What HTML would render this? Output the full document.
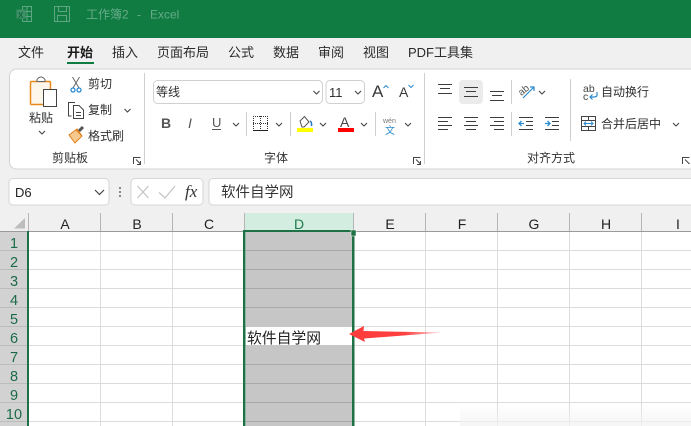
<!DOCTYPE html>
<html lang="zh-CN"><head><meta charset="utf-8"><title>Excel</title>
<style>
html,body{margin:0;padding:0;width:691px;height:426px;overflow:hidden;background:#fff}
svg{display:block;position:absolute;left:0;top:0}
text{font-family:"Liberation Sans","Noto Sans CJK SC",sans-serif;fill:#303030;font-size:12px}
.tab{font-size:13px;fill:#2b2b2b}
.hd{font-size:14px;fill:#222;text-anchor:middle}
.rn{font-size:14.500px;fill:#1c6a48;text-anchor:middle}
.lb{font-size:12px;fill:#333}
.ln{stroke:#444;stroke-width:1;fill:none}
.ch{stroke:#444;stroke-width:1.1;fill:none}
.sep{stroke:#cfcfcf;stroke-width:1}
.grid{stroke:#dcdcdc;stroke-width:1}
.gridd{stroke:#a9a9a9;stroke-width:1}
</style></head><body>
<svg width="691" height="426" viewBox="0 0 691 426" xmlns="http://www.w3.org/2000/svg">
<defs>
<linearGradient id="tail" x1="0" x2="1" y1="0" y2="0"><stop offset="0" stop-color="#ff3b3b"/><stop offset=".6" stop-color="#ff4040"/><stop offset="1" stop-color="#ff6060" stop-opacity=".35"/></linearGradient>
<linearGradient id="fade" x1="0" x2="0" y1="0" y2="1"><stop offset="0" stop-color="#f3f3f3" stop-opacity="0"/><stop offset="1" stop-color="#f3f3f3" stop-opacity=".8"/></linearGradient>
</defs>
<rect width="691" height="426" fill="#f0f0f0"/>
<!-- title bar -->
<rect width="691" height="38" fill="#107c41"/>
<g fill="none" stroke="#5ea584" stroke-width="1">
<path d="M22.500 6.500H31.500V21.500H22.500M22.500 6.500V21.500M22.500 11.500H31.500M22.500 16.500H31.500M27 6.500V21.500"/>
<path d="M54.500 6.500H69.500V21.500H54.500ZM58.500 6.500V11.500H66.500V6.500M57.500 21.500V15.500H66.500V21.500"/>
</g>
<rect x="16.500" y="9.500" width="9" height="9" fill="#3f9069"/>
<text x="18" y="18" style="font-size:8px;font-weight:bold;fill:#0e6b3a">X</text>
<text x="86" y="18.500" style="font-size:12px;fill:#66ab8a">工作簿2</text>
<text x="137" y="18.500" style="font-size:12px;fill:#66ab8a">-</text>
<text x="150" y="18.500" style="font-size:12px;fill:#66ab8a">Excel</text>
<!-- tabs -->
<text class="tab" x="18" y="57">文件</text>
<text class="tab" x="67" y="57" style="font-weight:bold;fill:#1c1c1c">开始</text>
<rect x="67" y="62" width="27" height="2" fill="#107c41"/>
<text class="tab" x="112" y="57">插入</text>
<text class="tab" x="157" y="57">页面布局</text>
<text class="tab" x="228" y="57">公式</text>
<text class="tab" x="273" y="57">数据</text>
<text class="tab" x="318" y="57">审阅</text>
<text class="tab" x="363" y="57">视图</text>
<text class="tab" x="408" y="57">PDF工具集</text>
<!-- ribbon -->
<rect x="9.500" y="69" width="700" height="100" rx="7" fill="#fff" stroke="#d3d3d3"/>
<!-- clipboard -->
<rect x="30.500" y="81.500" width="20" height="23" rx="1" fill="#fdf6ea" stroke="#e88a1a" stroke-width="1.500"/>
<path d="M37 81.500V79.500Q41 74.500 45 79.500V81.500Z" fill="#fff" stroke="#666"/>
<rect x="43.500" y="89.500" width="13" height="17" fill="#fff" stroke="#444"/>
<text x="29" y="122" style="font-size:12px">粘贴</text>
<path class="ch" d="M39 131l3 3 3-3"/>
<!-- scissors -->
<path d="M72.500 77L79 88M79.500 77L73 88" stroke="#666" fill="none"/>
<circle cx="73" cy="90" r="2" fill="#fff" stroke="#2b8bd0" stroke-width="1.300"/>
<circle cx="79" cy="90" r="2" fill="#fff" stroke="#2b8bd0" stroke-width="1.300"/>
<text x="88" y="88">剪切</text>
<!-- copy -->
<path class="ln" d="M71.500 116H68.500V102.500H75"/>
<path class="ln" d="M73.500 105.500H79L83.500 110V118.500H73.500Z"/>
<path class="ln" d="M76 112.500H81M76 115.500H81" stroke="#555"/>
<text x="88" y="114">复制</text>
<path class="ch" d="M124.500 109l3 3 3-3"/>
<!-- format painter -->
<path d="M69 135L77 129L82 136L75 143Z" fill="#f8c98e" stroke="#e0801a"/>
<path d="M76 130L82 136" stroke="#e0801a"/>
<path d="M79 131L83 127" stroke="#555" stroke-width="3"/>
<text x="88" y="140">格式刷</text>
<text class="lb" x="52" y="162">剪贴板</text>
<path class="ln" d="M133.500 164V157.500H140.500M136 159.500L140.500 164M137 164.500H140.500V161" stroke="#555"/>
<line class="sep" x1="144.500" y1="73" x2="144.500" y2="164"/>
<!-- font boxes -->
<rect x="153.500" y="80.500" width="169" height="23" rx="4" fill="#fff" stroke="#d0d0d0"/>
<text x="156" y="96" style="font-size:12px">等线</text>
<path class="ch" d="M313.500 91l3 3 3-3"/>
<rect x="326" y="80.500" width="38.500" height="23" rx="4" fill="#fff" stroke="#d0d0d0"/>
<text x="329" y="97" style="font-size:13px">11</text>
<path class="ch" d="M355 91l3 3 3-3"/>
<text x="372" y="97" style="font-size:17px;fill:#3a3a3a">A</text>
<path d="M383.500 88l2.500-2.500 2.500 2.500" stroke="#2b8bd0" fill="none"/>
<text x="399" y="97" style="font-size:14px;fill:#3a3a3a">A</text>
<path d="M408.500 85l2.500 2.500 2.500-2.500" stroke="#2b8bd0" fill="none"/>
<!-- B I U -->
<text x="161" y="128" style="font-size:14px;font-weight:bold;fill:#555">B</text>
<text x="188" y="128" style="font-size:14px;font-style:italic;fill:#555">I</text>
<text x="212" y="127" style="font-size:13px;fill:#555">U</text>
<line x1="212" y1="129.500" x2="221" y2="129.500" stroke="#555"/>
<path class="ch" d="M233 123l3 3 3-3"/>
<line class="sep" x1="246.500" y1="112" x2="246.500" y2="136"/>
<path d="M253.500 116V130M260.500 116V130M267.500 116V130M253 116.500H268M253 123.500H268" fill="none" stroke="#333" stroke-dasharray="1 1"/>
<line x1="253" y1="130.500" x2="268" y2="130.500" stroke="#222"/>
<path class="ch" d="M276 123l3 3 3-3"/>
<line class="sep" x1="290.500" y1="112" x2="290.500" y2="136"/>
<path d="M300 121L304.500 116.500L309 122L304 127H302Z" fill="#fff" stroke="#555"/>
<path d="M310 121Q312 122 311.500 126" stroke="#1f77c0" stroke-width="1.500" fill="none"/>
<rect x="297" y="128" width="16" height="4" fill="#ffff00"/>
<path class="ch" d="M320 123l3 3 3-3"/>
<text x="340" y="127" style="font-size:14px;fill:#444">A</text>
<rect x="338" y="128" width="16" height="4" fill="#f00"/>
<path class="ch" d="M361 123l3 3 3-3"/>
<line class="sep" x1="375.500" y1="112" x2="375.500" y2="136"/>
<text x="383" y="123" style="font-size:7px;fill:#777">wén</text>
<text x="385" y="134" style="font-size:10px;fill:#2b8bd0">文</text>
<path class="ch" d="M405 123l3 3 3-3"/>
<text class="lb" x="264" y="162">字体</text>
<path class="ln" d="M413.500 164V157.500H420.500M416 159.500L420.500 164M417 164.500H420.500V161"/>
<line class="sep" x1="424.500" y1="73" x2="424.500" y2="164"/>
<!-- alignment -->
<rect x="459" y="80" width="24" height="24" rx="4" fill="#ebebeb"/>
<g stroke="#3c3c3c" fill="none">
<path d="M438 84.500H452M440 88.500H450M438 93.500H452"/>
<path d="M464 87.500H478M466 91.500H476M464 96.500H478"/>
<path d="M490 91.500H504M492 95.500H502M490 100.500H504"/>
<path d="M438 117.500H452M438 121.500H448M438 125.500H452M438 129.500H448"/>
<path d="M464 117.500H478M466 121.500H476M464 125.500H478M466 129.500H476"/>
<path d="M490 117.500H504M494 121.500H504M490 125.500H504M494 129.500H504"/>
<path d="M519 117.500H533M526 121.500H533M526 125.500H533M519 129.500H533"/>
<path d="M545 117.500H559M552 121.500H559M552 125.500H559M545 129.500H559"/>
</g>
<path d="M524 123.500H519M521.500 121L519 123.500L521.500 126" stroke="#2b8bd0" stroke-width="1.300" fill="none"/>
<path d="M545 123.500H550M547.500 121L550 123.500L547.500 126" stroke="#2b8bd0" stroke-width="1.300" fill="none"/>
<line class="sep" x1="511.500" y1="80" x2="511.500" y2="104"/>
<line class="sep" x1="511.500" y1="112" x2="511.500" y2="136"/>
<text x="518" y="93" transform="rotate(-40 524 90)" style="font-size:10px;fill:#555">ab</text>
<path d="M523 98L534 87M530 87H534V91" stroke="#2b8bd0" stroke-width="1.200" fill="none"/>
<path class="ch" d="M539 91l3 3 3-3"/>
<line class="sep" x1="570.500" y1="79" x2="570.500" y2="141"/>
<text x="583" y="92" style="font-size:10.500px;fill:#444">ab</text>
<text x="583" y="100" style="font-size:10.500px;fill:#444">c</text>
<path d="M597 92V95Q597 97 594 97H590M592.500 94.500L590 97L592.500 99.500" stroke="#2b8bd0" stroke-width="1.200" fill="none"/>
<text x="601" y="96">自动换行</text>
<rect x="581.500" y="116.500" width="14" height="14" fill="#fff" stroke="#444"/>
<path d="M581 120.500H596M581 126.500H596M588.500 116.500V120M588.500 127V130" stroke="#444" fill="none"/>
<path d="M584 123.500H593M586 121.500L584 123.500L586 125.500M591 121.500L593 123.500L591 125.500" stroke="#2b8bd0" fill="none"/>
<text x="601" y="128">合并后居中</text>
<path class="ch" d="M673 123l3 3 3-3"/>
<text class="lb" x="527" y="162">对齐方式</text>
<path class="ln" d="M682.500 164V157.500H689.500M685 159.500L689.500 164"/>
<!-- formula bar -->
<rect x="9" y="178.500" width="100" height="26.500" rx="4" fill="#fff" stroke="#d6d6d6"/>
<text x="15" y="197" style="font-size:13px;fill:#222">D6</text>
<path d="M95 190l4.500 4.500 4.500-4.500" stroke="#444" stroke-width="1.200" fill="none"/>
<g fill="#8a8a8a"><rect x="119" y="187" width="2" height="2"/><rect x="119" y="191" width="2" height="2"/><rect x="119" y="195" width="2" height="2"/></g>
<rect x="131" y="178.500" width="72" height="26.500" rx="4" fill="#fff" stroke="#d6d6d6"/>
<path d="M137.500 186L148.500 198M148.500 186L137.500 198" stroke="#c4c4c4" stroke-width="1.200" fill="none"/>
<path d="M159 192.500L165 198L175 186" stroke="#c4c4c4" stroke-width="1.200" fill="none"/>
<text x="185" y="197" style="font-family:'Liberation Serif',serif;font-style:italic;font-size:17px;fill:#333">fx</text>
<rect x="209" y="178.500" width="500" height="26.500" rx="4" fill="#fff" stroke="#d6d6d6"/>
<text x="221" y="197" style="font-size:14.500px;fill:#333">软件自学网</text>
<!-- grid -->
<rect x="0" y="232" width="691" height="194" fill="#fff"/>
<rect x="0" y="232" width="28" height="194" fill="#d2d2d2"/>
<path d="M14 228.500H25V218Z" fill="#bdbdbd"/>
<rect x="244" y="213" width="109" height="18" fill="#d3eee0"/>
<path class="grid" d="M100.500 232V426M172.500 232V426M425.500 232V426M497.500 232V426M569.500 232V426M641.500 232V426"/>
<path class="grid" d="M29 250.500H691M29 269.500H691M29 288.500H691M29 307.500H691M29 326.500H691M29 345.500H691M29 364.500H691M29 383.500H691M29 402.500H691M29 421.500H691"/>
<path d="M0 250.500H28M0 269.500H28M0 288.500H28M0 307.500H28M0 326.500H28M0 345.500H28M0 364.500H28M0 383.500H28M0 402.500H28M0 421.500H28" stroke="#bcbcbc" fill="none"/>
<path d="M28.500 213V231M100.500 213V231M172.500 213V231M244.500 213V231M353.500 213V231M425.500 213V231M497.500 213V231M569.500 213V231M641.500 213V231" stroke="#b5b5b5" fill="none"/>
<line x1="0" y1="231.500" x2="691" y2="231.500" stroke="#9b9b9b"/>
<text class="hd" x="65" y="229">A</text>
<text class="hd" x="137" y="229">B</text>
<text class="hd" x="209" y="229">C</text>
<text class="hd" x="299" y="229" style="fill:#1c7a4c">D</text>
<text class="hd" x="390" y="229">E</text>
<text class="hd" x="462" y="229">F</text>
<text class="hd" x="534" y="229">G</text>
<text class="hd" x="606" y="229">H</text>
<text class="hd" x="678" y="229">I</text>
<text class="rn" x="14" y="248">1</text>
<text class="rn" x="14" y="267">2</text>
<text class="rn" x="14" y="286">3</text>
<text class="rn" x="14" y="305">4</text>
<text class="rn" x="14" y="324">5</text>
<text class="rn" x="14" y="343">6</text>
<text class="rn" x="14" y="362">7</text>
<text class="rn" x="14" y="381">8</text>
<text class="rn" x="14" y="400">9</text>
<text class="rn" x="14" y="419">10</text>
<rect x="27" y="231" width="2" height="195" fill="#1e7145"/>
<!-- selection -->
<rect x="246" y="232" width="106" height="194" fill="#c6c6c6"/>
<path class="gridd" d="M246 250.500H352M246 269.500H352M246 288.500H352M246 307.500H352M246 364.500H352M246 383.500H352M246 402.500H352M246 421.500H352"/>
<rect x="246" y="327" width="106" height="18" fill="#fff"/>
<rect x="243" y="230" width="2.500" height="196" fill="#1e7145"/>
<rect x="243" y="230" width="110" height="2" fill="#1e7145"/>
<rect x="352" y="236" width="2.500" height="190" fill="#1e7145"/>
<rect x="351" y="230" width="5" height="6" fill="#1e7145" stroke="#fff" stroke-width=".5"/>
<text x="247" y="343" style="font-size:14.800px;fill:#222">软件自学网</text>
<!-- arrow -->
<polygon points="349,334 364,326 363.500,331 442,332.500 364,338.500 365,342" fill="url(#tail)"/>
<rect x="460" y="404" width="231" height="22" fill="url(#fade)"/>
</svg>
</body></html>
